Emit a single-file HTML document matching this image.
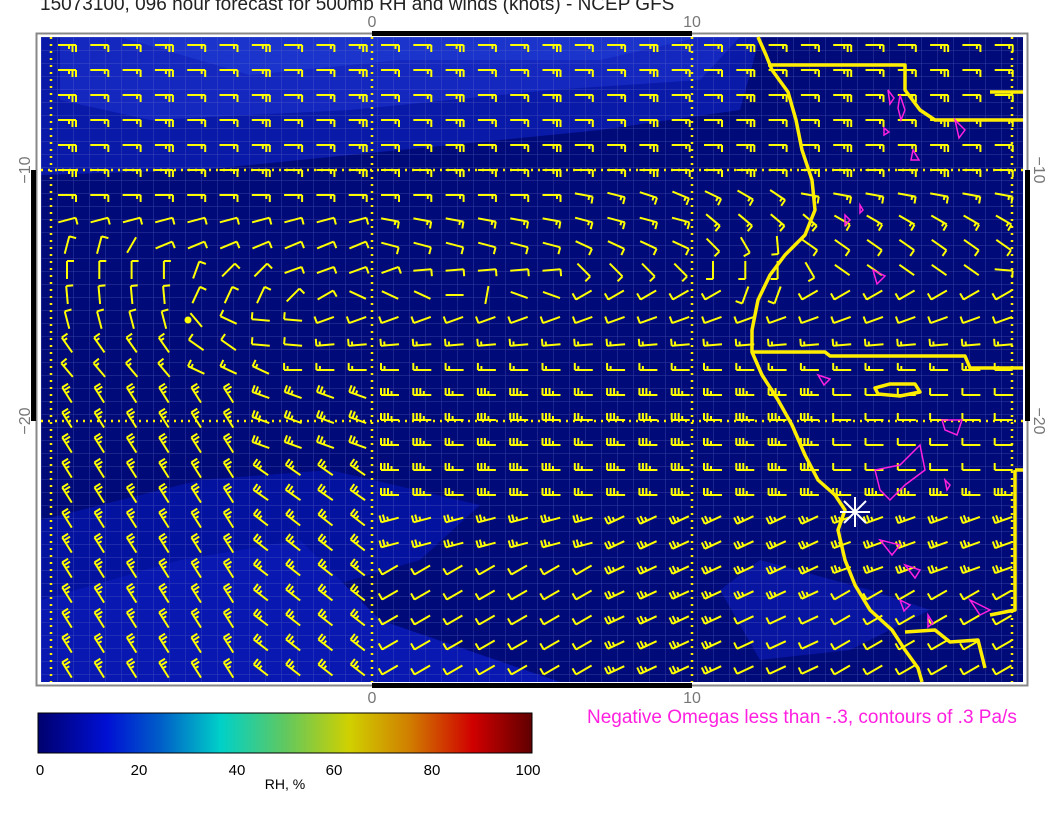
<!DOCTYPE html>
<html><head><meta charset="utf-8"><style>
html,body{margin:0;padding:0;background:#fff;width:1056px;height:816px;overflow:hidden;font-family:"Liberation Sans",sans-serif}
.t{position:absolute;white-space:nowrap}
</style></head><body>
<div class="t" style="left:40px;top:-6px;font-size:19px;color:#222">15073100, 096 hour forecast for 500mb RH and winds (knots) - NCEP GFS</div>
<svg id="s" width="1056" height="816" style="position:absolute;left:0;top:0">
<defs>
<linearGradient id="cb" x1="0" x2="1" y1="0" y2="0">
<stop offset="0" stop-color="#00006e"/><stop offset="0.14" stop-color="#0010d4"/><stop offset="0.25" stop-color="#0060c8"/><stop offset="0.37" stop-color="#00d0c8"/><stop offset="0.5" stop-color="#60c860"/><stop offset="0.63" stop-color="#d0d000"/><stop offset="0.75" stop-color="#d08000"/><stop offset="0.88" stop-color="#d00000"/><stop offset="1" stop-color="#600000"/>
</linearGradient>
<pattern id="gr" width="16" height="13" patternUnits="userSpaceOnUse" x="41" y="37">
<path d="M0 0V13M0 0H16" stroke="#6a70c8" stroke-width="1" opacity="0.5" fill="none"/>
</pattern>
</defs>
<rect x="36.5" y="33.5" width="991" height="652" fill="none" stroke="#888" stroke-width="2"/>
<rect x="41" y="37" width="982" height="645" fill="#000a78"/>
<path d="M41 37 L760 37 L740 110 L600 130 L400 150 L200 170 L41 175Z" fill="#0a1aa8"/>
<path d="M60 37 L740 37 L700 80 L550 90 L350 110 L150 120 L60 100Z" fill="#1428c0"/>
<path d="M120 37 L700 37 L600 60 L400 60 L250 75Z" fill="#1a34cc"/>
<path d="M41 520 L200 480 L330 470 L480 505 L420 560 L250 610 L41 640Z" fill="#0412a0"/>
<path d="M41 600 L180 560 L300 540 L380 620 L560 682 L41 682Z" fill="#0818b0"/>
<path d="M720 590 L760 560 L870 590 L930 610 L850 650 L760 660Z" fill="#0a1ab0" opacity="0.7"/>
<rect x="41" y="37" width="982" height="645" fill="url(#gr)"/>
<g stroke="#ffee00" stroke-width="2.5" stroke-dasharray="2,5" fill="none">
<path d="M372 37V682M692 37V682M41 170H1023M41 421H1023M51 37V682M1012 37V682"/>
</g>
<rect x="372" y="31" width="320" height="5" fill="#000"/>
<rect x="372" y="683" width="320" height="5" fill="#000"/>
<rect x="31" y="170" width="5" height="251" fill="#000"/>
<rect x="1025" y="170" width="5" height="251" fill="#000"/>
<g id="barbs" stroke="#ffff00" stroke-width="2" fill="none" stroke-linecap="butt"></g>
<circle cx="188" cy="320" r="3.5" fill="#ffff00"/>
<g stroke="#ffee00" stroke-width="3.5" fill="none" stroke-linejoin="round">
<path d="M758 37 L766 55 L772 70 L788 92 L796 120 L802 150 L812 180 L815 210 L805 235 L785 255 L770 275 L758 300 L752 330 L752 352 L762 375 L778 400 L792 425 L805 455 L818 480 L835 495 L845 510 L838 530 L845 560 L855 585 L870 610 L892 630 L905 650 L918 668 L922 682"/>
<path d="M768 65 L905 65 L905 90 L920 110 L935 120 L1023 120"/>
<path d="M990 92 L1023 92"/>
<path d="M752 352 L825 352 L830 356 L965 356 L970 368 L1023 368"/>
<path d="M1015 470 L1023 470 M1015 470 L1015 610 L990 615"/>
<path d="M905 632 L935 630 L950 642 L978 640 L985 668"/>
<path d="M875 388 L890 384 L915 384 L920 392 L900 396 L878 394Z"/>
</g>
<g stroke="#ff20e0" stroke-width="1.5" fill="none">
<path d="M888 90 l6 8 -4 6z M900 95 l5 15 -4 10 -3 -12z M913 150 l6 10 -8 0z M884 128 l5 4 -5 3z M955 120 l10 10 -6 8z M845 215 l5 5 -5 5z M860 205 l3 5 -3 3z M873 270 l12 6 -8 8z M818 375 l12 4 -6 6z M942 420 l20 0 -5 15 -12 -5z M875 470 l25 -5 20 -20 5 25 -20 15 -15 15 -10 -10z M880 540 l20 5 -8 10z M905 565 l15 5 -5 8z M945 480 l5 5 -3 5z M900 600 l10 5 -6 6z M970 600 l20 10 -10 5z M928 615 l5 8 -5 4z"/>
</g>
<g stroke="#fff" stroke-width="2">
<path d="M840 512 H870 M855 497 V527 M844 501 L866 523 M866 501 L844 523"/>
</g>
<text x="372" y="27" font-size="16" fill="#777" text-anchor="middle">0</text>
<text x="692" y="27" font-size="16" fill="#777" text-anchor="middle">10</text>
<text x="372" y="703" font-size="16" fill="#777" text-anchor="middle">0</text>
<text x="692" y="703" font-size="16" fill="#777" text-anchor="middle">10</text>
<text transform="translate(30,170) rotate(-90)" font-size="16" fill="#777" text-anchor="middle">−10</text>
<text transform="translate(30,421) rotate(-90)" font-size="16" fill="#777" text-anchor="middle">−20</text>
<text transform="translate(1034,170) rotate(90)" font-size="16" fill="#777" text-anchor="middle">−10</text>
<text transform="translate(1034,421) rotate(90)" font-size="16" fill="#777" text-anchor="middle">−20</text>
<rect x="38" y="713" width="494" height="40" fill="url(#cb)" stroke="#000" stroke-width="1"/>
<g font-size="15" fill="#000" text-anchor="middle">
<text x="40" y="775">0</text><text x="139" y="775">20</text><text x="237" y="775">40</text><text x="334" y="775">60</text><text x="432" y="775">80</text><text x="528" y="775">100</text>
<text x="285" y="789" font-size="14">RH, %</text>
</g>
<text x="587" y="723" font-size="19" fill="#ff20e0">Negative Omegas less than -.3, contours of .3 Pa/s</text>
</svg>
<script>
function lerp(a,b,t){return a+(b-a)*t;}
function field(r,c){
 if(r<=5) return [0,(c%3==0)?3:2];
 if(r==6){ if(c<16) return [0,2]; if(c<23) return [10+(c-16)*4,2]; return [10,2]; }
 if(r==7){ if(c<10) return [-15,1]; if(c<16) return [10,2]; if(c<20) return [15,2]; if(c<24) return [40,2]; return [30,2]; }
 if(r==8){ if(c<2) return [-75,1]; if(c==2) return [-60,0]; if(c<10) return [-22,1]; if(c<16) return [15,1]; if(c<20) return [25,1]; if(c==20) return [45,1]; if(c==21) return [60,1]; if(c==22) return [85,1]; return [35,1]; }
 if(r==9){ if(c<4) return [-90,1]; if(c==4) return [-70,1]; if(c<7) return [-45,1]; if(c<11) return [-20,1]; if(c<16) return [-5,1]; if(c<20) return [45,1]; if(c<23) return [90,1]; if(c==23) return [60,1]; if(c<29) return [35,0]; return [5,1]; }
 if(r==10){ if(c<4) return [-95,1]; if(c<7) return [-65,1]; if(c==7) return [-45,1]; if(c==8) return [-30,1]; if(c<12) return [25,0]; if(c==12) return [0,0]; if(c==13) return [-80,0]; if(c<16) return [-160,0]; if(c==21||c==22) return [-250,1]; return [-210,1]; }
 if(r==11){ if(c<4) return [-105,1]; if(c==4) return [-130,0]; if(c==5) return [-155,1]; if(c<8) return [-175,1]; return [-200,1]; }
 if(r==12){ if(c<4) return [-125,2]; if(c<6) return [-145,1]; if(c<8) return [-175,1]; return [-185,2]; }
 if(r==13){ if(c<4) return [-130,2]; if(c<7) return [-155,2]; return [-180,2]; }
 if(r<=18){ if(c<6) return [-122,3]; if(c<10) return r>=17?[-145,3]:[-160,3]; if(c>=24&&r<=17) return [-180,1]; return [-180,(c%4==0)?3:4]; }
 // rows 19-25
 if(c<6) return [-122,3];
 if(c<10) return [-142,3];
 if(c<17) return r>=21?[-210,1]:[-195,3];
 if(c<24) return [-205,r>=23&&c>20?1:3];
 return r>=22?[-210,1]:[-200,3];
}
var g=document.getElementById('barbs'),d='';
for(var r=0;r<26;r++){for(var c=0;c<30;c++){
 var x=67+c*32.3,y=45+r*25;
 var f=field(r,c),a=f[0]*Math.PI/180,n=f[1];
 var dx=Math.cos(a),dy=Math.sin(a),L=9;
 var px=x-dx*L,py=y-dy*L,ex=x+dx*L,ey=y+dy*L,qx=-dy,qy=dx;
 d+='M'+px.toFixed(1)+' '+py.toFixed(1)+'L'+ex.toFixed(1)+' '+ey.toFixed(1);
 for(var k=0;k<n;k++){var bx=ex-dx*k*3.5,by=ey-dy*k*3.5,bl=(k==n-1&&n>1)?4:7;d+='M'+bx.toFixed(1)+' '+by.toFixed(1)+'l'+(qx*bl).toFixed(1)+' '+(qy*bl).toFixed(1);}
}}
var p=document.createElementNS('http://www.w3.org/2000/svg','path');p.setAttribute('d',d);g.appendChild(p);
</script>
</body></html>
